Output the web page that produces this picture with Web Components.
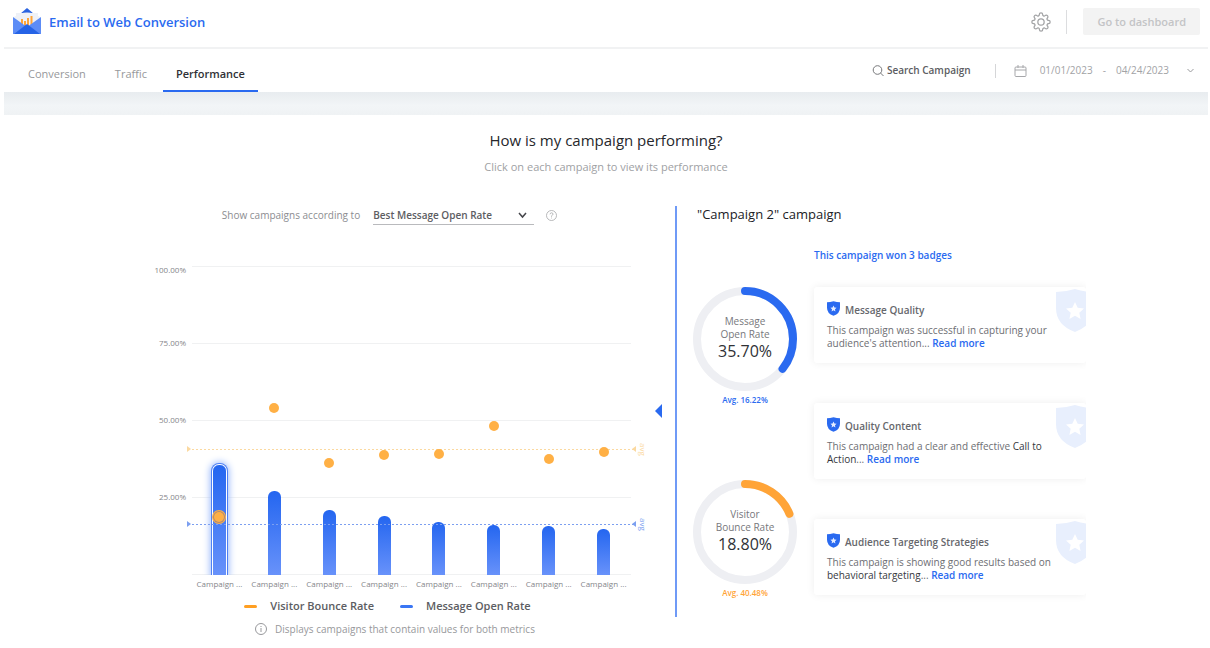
<!DOCTYPE html>
<html lang="en">
<head>
<meta charset="utf-8">
<title>Email to Web Conversion</title>
<style>
html { --blue: #2a6af0; --orange: #ffa437; --ink: #4a4b50; --muted: #97989b; background: #fff; }
body { margin: 0; font-family: "Open Sans", "Noto Sans", sans-serif; font-size: 10px; line-height: 13px; color: var(--ink); }
</style>
</head>
<body>
<conversion-app></conversion-app>
<script>
const base = `*{box-sizing:border-box} button,select{font:inherit;color:inherit;background:none;border:0;padding:0;margin:0;cursor:pointer} a{text-decoration:none} svg{display:block;flex:none}`;
function define(name, render) {
  customElements.define(name, class extends HTMLElement {
    connectedCallback() {
      if (this.shadowRoot) return;
      const t = document.createElement('template');
      t.innerHTML = render(this).replace('<style>', '<style>' + base);
      this.attachShadow({ mode: 'open' }).append(t.content.cloneNode(true));
    }
  });
}

define('app-header', () => `<style>
:host{display:flex;align-items:center;height:49px;padding:0 8px 4px 9px;border-bottom:2px solid #f1f2f3}
h1{margin:0 auto 0 8px;font-size:13px;line-height:18px;font-weight:600;color:var(--blue)}
.gear{color:#a2a3a5}
i{width:1px;height:24px;background:#dcdddf;margin:0 16px 0 15px}
.go{height:27px;padding:0 14px;border-radius:2px;background:#f3f3f3;color:#c3c4c6;font-size:11px;font-weight:600}
</style>
<svg width="28" height="27" viewBox="0 0 28 27"><path d="M7 6 14 0l7 6z" fill="#2a63e0"/><path d="M1 9q13-9 26 0v8H1z" fill="#eef1f7"/><path d="M3 5h22v15H3z" fill="#eef1f7"/><path d="M9 11v8M12 13v6M15 10v9M18.500 8v11" stroke="#ffa437" stroke-width="2"/><path d="M0 9l14 10L28 9v17H0z" fill="#5c8cf6"/><path d="M1 26 14 16l13 10z" fill="#2563e6"/></svg>
<h1>Email to Web Conversion</h1>
<button class="gear" aria-label="Settings"><svg width="20" height="20" viewBox="0 0 24 24" fill="none" stroke="currentColor" stroke-width="1.500" stroke-linejoin="round"><circle cx="12" cy="12" r="3.800"/><path d="M19.400 15a1.650 1.650 0 0 0 .33 1.820l.06.06a2 2 0 1 1-2.830 2.830l-.06-.06a1.650 1.650 0 0 0-2.820 1.170V21a2 2 0 0 1-4 0v-.09A1.650 1.650 0 0 0 7.200 19.650l-.06.06a2 2 0 1 1-2.830-2.830l.06-.06A1.650 1.650 0 0 0 3.090 14H3a2 2 0 0 1 0-4h.09A1.650 1.650 0 0 0 4.370 7.180l-.06-.06a2 2 0 1 1 2.830-2.830l.06.06A1.650 1.650 0 0 0 10 3.090V3a2 2 0 0 1 4 0v.09a1.650 1.650 0 0 0 2.820 1.260l.06-.06a2 2 0 1 1 2.830 2.830l-.06.06A1.650 1.650 0 0 0 20.910 10H21a2 2 0 0 1 0 4h-.09a1.650 1.650 0 0 0-1.510 1z"/></svg></button><i></i>
<button class="go">Go to dashboard</button>`);

define('app-nav', () => `<style>
:host{display:flex;justify-content:space-between;height:43px;padding:0 13px 0 11px}
nav,.tools{display:flex;gap:3px}
nav a{padding:17px 13px 0;font-size:11px;line-height:16px;color:var(--muted);border-bottom:2px solid transparent}
nav a[aria-current]{color:#303136;font-weight:600;border-color:var(--blue)}
.tools{align-items:center;gap:0;color:#a2a3a6}
button{display:flex;align-items:center}
.search{gap:3px;color:#5c5d62;font-weight:600}
i{width:1px;height:14px;background:#d5d6d8;margin:0 18px 0 24px}
.range span{margin-left:10px} .range span:first-of-type{margin-left:13px} .range svg:last-child{margin-left:17px}
</style>
<nav><a href="#conversion">Conversion</a><a href="#traffic">Traffic</a><a href="#performance" aria-current="page">Performance</a></nav>
<div class="tools"><button class="search"><svg width="12" height="12" viewBox="0 0 12 12" fill="none" stroke="#77787b"><circle cx="5.500" cy="5" r="4.300"/><path d="m8.500 8 3 3"/></svg>Search Campaign</button><i></i>
<button class="range"><svg width="13" height="12" viewBox="0 0 13 12" fill="none" stroke="#a6a7aa"><rect x="1" y="2" width="11" height="9.500" rx="1"/><path d="M1 5h11M4 0v3M9 0v3"/></svg><span>01/01/2023</span><span>-</span><span>04/24/2023</span><svg width="9" height="6" viewBox="0 0 9 6" fill="none" stroke="#9a9b9e"><path d="m1.500 1 3 3 3-3"/></svg></button></div>`);

const campaigns = [[35.7,18.8],[27.1,54.1],[21,36.4],[19,39],[17,39.2],[16.2,48.1],[16,37.4],[15,39.9]];
define('campaign-chart', () => `<style>
:host{display:grid;grid-template-columns:33px minmax(0,1fr);column-gap:6px;font-size:8px;line-height:12px;color:#85868a}
.y{display:flex;flex-direction:column;text-align:right;margin-top:-6px}
.y span{height:77px;white-space:nowrap} .y span:first-child{height:77px;padding-top:4px}
.plot{position:relative;height:309px;display:grid;grid-template-columns:repeat(8,1fr);background:repeating-linear-gradient(#f0f1f2 0 1px,transparent 1px 77px)}
.col{position:relative;display:flex;align-items:flex-end;justify-content:center}
.bar{width:13px;border-radius:6px 6px 0 0;background:linear-gradient(#2466f0,#6892fa)}
.on .bar{box-shadow:0 0 0 1px #fff,0 0 0 2px #4f80f3,0 0 7px 3px #9bbafb;clip-path:inset(-12px -12px 0)}
.dot{position:absolute;left:calc(50% - 5px);width:10px;height:10px;border-radius:5px;margin-bottom:-5px;background:#ffb045}
.on .dot{box-shadow:0 0 0 1px #b08a75,0 0 0 2px #ffb045}
.dots{position:absolute;inset:0;display:grid;grid-template-columns:repeat(8,1fr);pointer-events:none}
.avg{position:absolute;left:0;right:-3px;height:1px;background:repeating-linear-gradient(90deg,currentColor 0 2px,transparent 2px 4px)}
.avg::before,.avg::after{content:"";position:absolute;top:-3px;border:solid transparent;border-width:3px 0 3px 4px;border-left-color:currentColor;left:-5px}
.avg::after{left:auto;right:-2px;border-width:3px 4px 3px 0;border-right-color:currentColor;border-left-color:transparent}
.avg span{position:absolute;left:calc(100% + 3px);top:-6px;writing-mode:vertical-rl;font-size:8px;line-height:12px}
.x{grid-column:2;display:grid;grid-template-columns:repeat(8,1fr);text-align:center;padding-top:3px;white-space:nowrap}
</style>
<div class="y"><span>100.00%</span><span>75.00%</span><span>50.00%</span><span>25.00%</span></div>
<div class="plot">
${campaigns.map(([a,b],i)=>`<button class="col ${i?'':'on'}" aria-label="Campaign ${i+1}"><span class="bar" style="height:${a}%"></span></button>`).join('')}
<div class="avg" style="bottom:40.480%;color:#fbd9a0"><span>avg</span></div><div class="avg" style="bottom:16.220%;color:#7c9ff0"><span>avg</span></div>
<div class="dots">${campaigns.map(([a,b],i)=>`<div class="col ${i?'':'on'}"><span class="dot" style="bottom:${b}%"></span></div>`).join('')}</div>
</div>
<div class="x">${campaigns.map(()=>'<span>Campaign ...</span>').join('')}</div>`);

define('campaign-panel', () => `<style>
:host{display:block}
.filter{display:flex;align-items:center;justify-content:center;height:19px;padding-right:36px;margin-bottom:41px;color:#8c8d91}
.sel{position:relative;margin:0 12px 0 13px;width:161px}
select{appearance:none;width:100%;height:19px;border-bottom:1px solid #b9babd;color:#5c5d62;font-weight:600;line-height:16px}
.sel svg{position:absolute;right:7px;top:6px;pointer-events:none}
.plot{padding-right:31px}
ul{display:flex;justify-content:center;gap:26px;list-style:none;margin:8px 40px 7px 0;padding:0;font-size:11px;line-height:16px;font-weight:600;color:#5c5d62}
li{display:flex;align-items:center;gap:13px} li::before{content:"";width:13px;height:3px;border-radius:2px;background:var(--c)}
p{display:flex;align-items:center;justify-content:center;gap:8px;margin:0 25px 0 0;font-size:10px;line-height:16px;color:var(--muted)}
</style>
<div class="filter"><label for="sort">Show campaigns according to</label><div class="sel"><select id="sort"><option>Best Message Open Rate</option></select><svg width="9" height="7" viewBox="0 0 9 7" fill="none" stroke="#45464b" stroke-width="1.500"><path d="m1 1 3.500 4L8 1"/></svg></div>
<svg width="11" height="11" viewBox="0 0 11 11" fill="none" stroke="#a6a7aa" stroke-width=".8"><circle cx="5.500" cy="5.500" r="5"/><path d="M4 4.300q.2-1.500 1.600-1.500T7 4.200q0 .8-1.500 1.600v.9M5.500 7.600v.8"/></svg></div>
<campaign-chart class="plot"></campaign-chart>
<ul><li style="--c:#ff9f22">Visitor Bounce Rate</li><li style="--c:#3a76f4">Message Open Rate</li></ul>
<p><svg width="12" height="12" viewBox="0 0 12 12" fill="none" stroke="#97989b"><circle cx="6" cy="6" r="5.500"/><path d="M6 5v4M6 3v1"/></svg>Displays campaigns that contain values for both metrics</p>`);

define('rate-gauge', el => `<style>
:host{display:flex;flex-direction:column;align-items:center;gap:3px;color:#77787c}
.ring{display:grid;place-items:center;width:104px}
.ring>*{grid-area:1/1}
.text{text-align:center;padding-bottom:2px}
strong{display:block;font-size:16px;line-height:20px;font-weight:500;color:#303136}
small{font-size:8px;line-height:12px;font-weight:600;color:var(--c)}
</style>
<div class="ring"><svg width="104" height="104" viewBox="0 0 104 104" fill="none" stroke-width="8"><circle cx="52" cy="52" r="48" stroke="#eeeff3"/><circle cx="52" cy="52" r="48" stroke="var(--c)" stroke-linecap="round" pathLength="100" stroke-dasharray="${el.getAttribute('value')} 100" transform="rotate(-90 52 52)"/></svg>
<div class="text"><slot></slot><strong>${el.getAttribute('value')}0%</strong></div></div>
<small>Avg. ${el.getAttribute('avg')}%</small>`);

const shield = 'M0 3Q9 3 19 0 29 3 38 3V19Q38 36 19 43 0 36 0 19z';
const star = 'm19 13 2.700 5.800 6.300.7-4.700 4.300 1.300 6.200-5.600-3.200-5.600 3.200 1.300-6.200-4.700-4.300 6.300-.7z';
define('badge-card', el => `<style>
:host{display:block;position:relative;height:76px;padding:12px 30px 0 13px;border-radius:3px;background:#fff;box-shadow:0 0 8px #00000012;clip-path:inset(-12px 0 -12px -12px);color:#6d6e73}
h3{display:flex;align-items:center;gap:5px;margin:0 0 5px;font-size:10px;line-height:18px;font-weight:600;color:#66676c}
h3 span{padding-top:2px} h3 svg{margin-bottom:2px}
p{margin:0} a{color:var(--blue);font-weight:600}
.big{position:absolute;right:-8px;top:2px}
</style>
<h3><svg width="13" height="15" viewBox="0 0 38 43"><path d="${shield}" fill="#2a6af0"/><path d="${star}" fill="#e6edff"/></svg><span>${el.getAttribute('name')}</span></h3>
<p><slot></slot> <a href="#more">Read more</a></p>
<svg class="big" width="38" height="43" viewBox="0 0 38 43"><path d="${shield}" fill="#e8effd"/><path d="${star}" fill="#fff"/></svg>`);

define('campaign-details', () => `<style>
:host{display:grid;grid-template-columns:104px minmax(0,1fr);column-gap:17px;align-content:start}
h2{grid-column:1/-1;margin:0 0 0 4px;font-size:13px;line-height:16px;font-weight:500;color:#202126}
.won{grid-column:2;margin:27px 0 25px;color:var(--blue);font-weight:600}
.gauges{display:flex;flex-direction:column;gap:74px}
.cards{display:flex;flex-direction:column;gap:40px}
b{font-weight:500;color:#36373c}
</style>
<h2>"Campaign 2" campaign</h2><p class="won">This campaign won 3 badges</p>
<div class="gauges"><rate-gauge value="35.7" avg="16.22" style="--c:#2a6af0">Message<br>Open Rate</rate-gauge><rate-gauge value="18.8" avg="40.48" style="--c:#ffa437">Visitor<br>Bounce Rate</rate-gauge></div>
<div class="cards"><badge-card name="Message Quality">This campaign was successful in capturing your audience's attention...</badge-card>
<badge-card name="Quality Content">This campaign had a clear and effective <b>Call to</b> <b>Action</b>...</badge-card>
<badge-card name="Audience Targeting Strategies">This campaign is showing good results based on <b>behavioral targeting</b>...</badge-card></div>`);

define('conversion-app', () => `<style>
:host{display:block;padding:0 2px 0 4px}
.band{height:23px;background:linear-gradient(#e8ecef,#f2f5f7 60%,#eff2f4)}
header{text-align:center;padding:15px 0 0}
h2{margin:0;font-size:15px;line-height:20px;font-weight:500;color:#26272c}
header p{margin:9px 0 0;font-size:11px;line-height:16px;color:#a0a1a4}
main{display:grid;grid-template-columns:509px minmax(0,1fr);max-width:960px;margin:31px auto 0;padding-left:27px}
campaign-details{position:relative;align-self:start;border-left:2px solid #6f9af6;margin-left:13px;padding-left:16px;min-height:411px}
campaign-panel{min-width:0}
campaign-details::before{content:"";position:absolute;left:-22px;top:198px;border:solid transparent;border-width:7px 7px 7px 0;border-right-color:var(--blue)}
</style>
<app-header></app-header><app-nav></app-nav><div class="band"></div>
<header><h2>How is my campaign performing?</h2><p>Click on each campaign to view its performance</p></header>
<main><campaign-panel></campaign-panel><campaign-details></campaign-details></main>`);
</script>
</body>
</html>
